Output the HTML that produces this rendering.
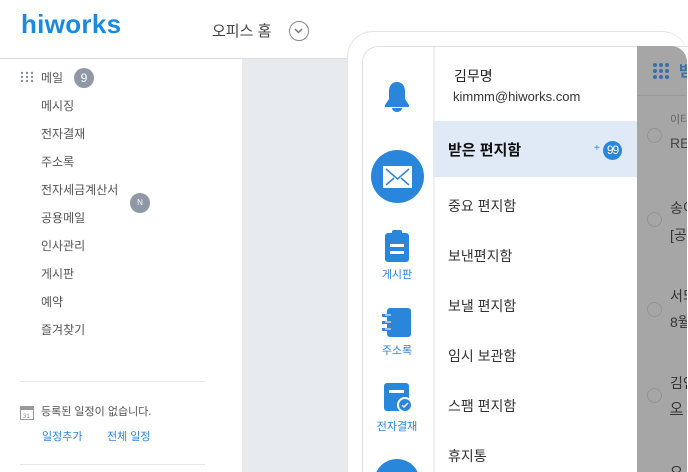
<!DOCTYPE html>
<html><head><meta charset="utf-8"><style>
*{margin:0;padding:0;box-sizing:border-box}
html,body{width:688px;height:472px;overflow:hidden;background:#fff}
body{font-family:"Liberation Sans","Noto Sans CJK KR",sans-serif}
#w{position:relative;width:688px;height:472px;overflow:hidden}
.a{position:absolute;white-space:nowrap}
.nav{font-size:12px;color:#555;left:41px}
.menu{font-size:14px;color:#333;left:448px}
.ic{fill:#2a86db}
.lbl{font-size:11px;color:#2a86db;text-align:center;width:70px;left:362px}
.rt{font-size:14px;color:#444;left:670px}
.rs{font-size:11px;color:#666;left:670px}
.cir{position:absolute;left:647px;width:15px;height:15px;border:1px solid #929292;border-radius:50%}
</style></head><body><div id="w">
<div class="a" style="left:21px;top:9px;font-size:26px;font-weight:bold;color:#1a8ae0;letter-spacing:0.3px">hiworks</div>
<div class="a" style="left:212px;top:20px;font-size:15px;color:#444">오피스 홈</div>
<div class="a" style="left:289px;top:21px;width:20px;height:20px;border:1.5px solid #888;border-radius:50%"><svg width="17" height="17" viewBox="0 0 17 17" style="position:absolute;left:0;top:0"><path d="M5 7l3.5 3.5L12 7" fill="none" stroke="#777" stroke-width="1.5"/></svg></div>
<div class="a" style="left:0;top:58px;width:688px;height:1px;background:#ddd"></div>
<div class="a" style="left:242px;top:59px;width:120px;height:413px;background:#e8ebee"></div>
<svg class="a" style="left:20px;top:71px" width="14" height="12"><g fill="#8a8f9a"><circle cx="2" cy="2" r="1.2"/><circle cx="7" cy="2" r="1.2"/><circle cx="12" cy="2" r="1.2"/><circle cx="2" cy="6" r="1.2"/><circle cx="7" cy="6" r="1.2"/><circle cx="12" cy="6" r="1.2"/><circle cx="2" cy="10" r="1.2"/><circle cx="7" cy="10" r="1.2"/><circle cx="12" cy="10" r="1.2"/></g></svg>
<div class="a nav" style="top:69px">메일</div>
<div class="a" style="left:74px;top:68px;width:20px;height:20px;border-radius:50%;background:#9097a6;color:#fff;font-size:12px;text-align:center;line-height:20px">9</div>
<div class="a nav" style="top:97px">메시징</div>
<div class="a nav" style="top:125px">전자결재</div>
<div class="a nav" style="top:153px">주소록</div>
<div class="a nav" style="top:181px">전자세금계산서</div>
<div class="a" style="left:130px;top:193px;width:20px;height:20px;border-radius:50%;background:#9097a6;color:#fff;font-size:8px;text-align:center;line-height:20px">N</div>
<div class="a nav" style="top:209px">공용메일</div>
<div class="a nav" style="top:237px">인사관리</div>
<div class="a nav" style="top:265px">게시판</div>
<div class="a nav" style="top:293px">예약</div>
<div class="a nav" style="top:321px">즐겨찾기</div>
<div class="a" style="left:20px;top:381px;width:185px;height:1px;background:#e6e6e6"></div>
<svg class="a" style="left:20px;top:406px" width="14" height="14"><rect x="0.5" y="0.5" width="13" height="13" fill="#fff" stroke="#999"/><rect x="0" y="0" width="14" height="4" fill="#999"/><text x="3" y="12" font-size="6" fill="#888">31</text></svg>
<div class="a" style="left:41px;top:403px;font-size:11px;color:#555">등록된 일정이 없습니다.</div>
<div class="a" style="left:42px;top:428px;font-size:11px;color:#2a86db">일정추가</div>
<div class="a" style="left:107px;top:428px;font-size:11px;color:#2a86db">전체 일정</div>
<div class="a" style="left:20px;top:464px;width:185px;height:1px;background:#e6e6e6"></div>

<div class="a" style="left:347px;top:31px;width:341px;height:441px;background:#fff;border:1px solid #e4e4e4;border-bottom:none;border-right:none;border-top-left-radius:26px;border-top-right-radius:26px"></div>
<div class="a" style="left:362px;top:46px;width:326px;height:426px;background:#fff;border:1px solid #e0e0e0;border-bottom:none;border-right:none;border-top-left-radius:16px;overflow:hidden">
 <div style="position:absolute;left:70px;top:0;width:2px;height:426px;background:#f0f0f0"></div>
 <div style="position:absolute;left:11px;top:412px;width:46px;height:46px;border-radius:50%;background:#2a86db"></div>
</div>
<div class="a" style="left:637px;top:46px;width:50px;height:426px;background:#a6a6a6;border-top-right-radius:16px;overflow:hidden">
 <div style="position:absolute;left:0;top:49px;width:51px;height:1px;background:#999"></div>
 <div style="position:absolute;left:33px;top:416px;font-size:14px;color:#333">오</div>
</div>
<svg class="a" style="left:652px;top:62px" width="22" height="18"><g fill="#3a6ea8"><circle cx="3" cy="3" r="2"/><circle cx="9" cy="3" r="2"/><circle cx="15" cy="3" r="2"/><circle cx="3" cy="9" r="2"/><circle cx="9" cy="9" r="2"/><circle cx="15" cy="9" r="2"/><circle cx="3" cy="15" r="2"/><circle cx="9" cy="15" r="2"/><circle cx="15" cy="15" r="2"/></g></svg>
<div class="a" style="left:679px;top:60px;font-size:15px;color:#3a6ea8;font-weight:bold;width:8px;overflow:hidden">받</div>
<div class="cir" style="top:128px"></div><div class="a rs" style="top:111px;width:17px;overflow:hidden">이타</div><div class="a rt" style="top:135px;width:17px;overflow:hidden">RE</div>
<div class="cir" style="top:212px"></div><div class="a rt" style="top:198px;color:#333;width:17px;overflow:hidden">송이</div><div class="a rt" style="top:225px;color:#333;width:17px;overflow:hidden">[공</div>
<div class="cir" style="top:302px"></div><div class="a rt" style="top:286px;color:#333;width:17px;overflow:hidden">서되</div><div class="a rt" style="top:312px;color:#333;width:17px;overflow:hidden">8월</div>
<div class="cir" style="top:388px"></div><div class="a rt" style="top:373px;color:#333;width:17px;overflow:hidden">김인</div><div class="a rt" style="top:398px;color:#333;text-decoration:underline;width:17px;overflow:hidden">오</div>

<svg class="a" style="left:380px;top:80px" width="34" height="34" viewBox="0 0 34 34"><path class="ic" d="M17 2c-5 0-8 4-8 9v8l-4 6v2h24v-2l-4-6v-8c0-5-3-9-8-9z"/><path class="ic" d="M12 28a5 4 0 0 0 10 0z"/></svg>
<div class="a" style="left:371px;top:150px;width:53px;height:53px;border-radius:50%;background:#2a86db"></div>
<svg class="a" style="left:383px;top:166px" width="29" height="22"><rect x="0" y="0" width="29" height="22" fill="#fff"/><path d="M3 3l11.5 10L26 3M3 19l8-7M26 19l-8-7" fill="none" stroke="#2a86db" stroke-width="1.5"/></svg>
<svg class="a" style="left:384px;top:230px" width="26" height="33"><rect x="1" y="3" width="24" height="29" rx="3" class="ic"/><rect x="8" y="0" width="10" height="6" rx="2" class="ic"/><rect x="6" y="14" width="14" height="3" fill="#fff"/><rect x="6" y="21" width="14" height="3" fill="#fff"/></svg>
<div class="a lbl" style="top:266px">게시판</div>
<svg class="a" style="left:381px;top:308px" width="30" height="30"><rect x="6" y="0" width="24" height="29" rx="3" class="ic"/><rect x="1" y="6" width="9" height="3" class="ic"/><rect x="1" y="13" width="9" height="3" class="ic"/><rect x="1" y="20" width="9" height="3" class="ic"/><path d="M4 7h6M4 14h6M4 21h6" stroke="#fff" stroke-width="1"/></svg>
<div class="a lbl" style="top:342px">주소록</div>
<svg class="a" style="left:384px;top:383px" width="32" height="32"><rect x="0" y="0" width="25" height="28" rx="3" class="ic"/><rect x="5" y="7" width="15" height="3" fill="#fff"/><circle cx="21" cy="22" r="8" fill="#fff"/><circle cx="21" cy="22" r="6" class="ic"/><path d="M18 22l2 2 4-4" fill="none" stroke="#fff" stroke-width="1.5"/></svg>
<div class="a lbl" style="top:418px">전자결재</div>

<div class="a" style="left:454px;top:66px;font-size:14px;color:#222">김무명</div>
<div class="a" style="left:453px;top:89px;font-size:13px;color:#333">kimmm@hiworks.com</div>
<div class="a" style="left:433px;top:121px;width:204px;height:56px;background:#dfeaf6"></div>
<div class="a" style="left:448px;top:139px;font-size:15px;font-weight:bold;color:#111">받은 편지함</div>
<div class="a" style="left:594px;top:143px;font-size:10px;color:#2a86db">+</div>
<div class="a" style="left:603px;top:141px;width:19px;height:19px;border-radius:50%;background:#2a86db;color:#fff;font-size:12px;line-height:19px;text-align:center;letter-spacing:-1px">99</div>
<div class="a menu" style="top:196px">중요 편지함</div>
<div class="a menu" style="top:246px">보낸편지함</div>
<div class="a menu" style="top:296px">보낼 편지함</div>
<div class="a menu" style="top:346px">임시 보관함</div>
<div class="a menu" style="top:396px">스팸 편지함</div>
<div class="a menu" style="top:446px">휴지통</div>
</div></body></html>
